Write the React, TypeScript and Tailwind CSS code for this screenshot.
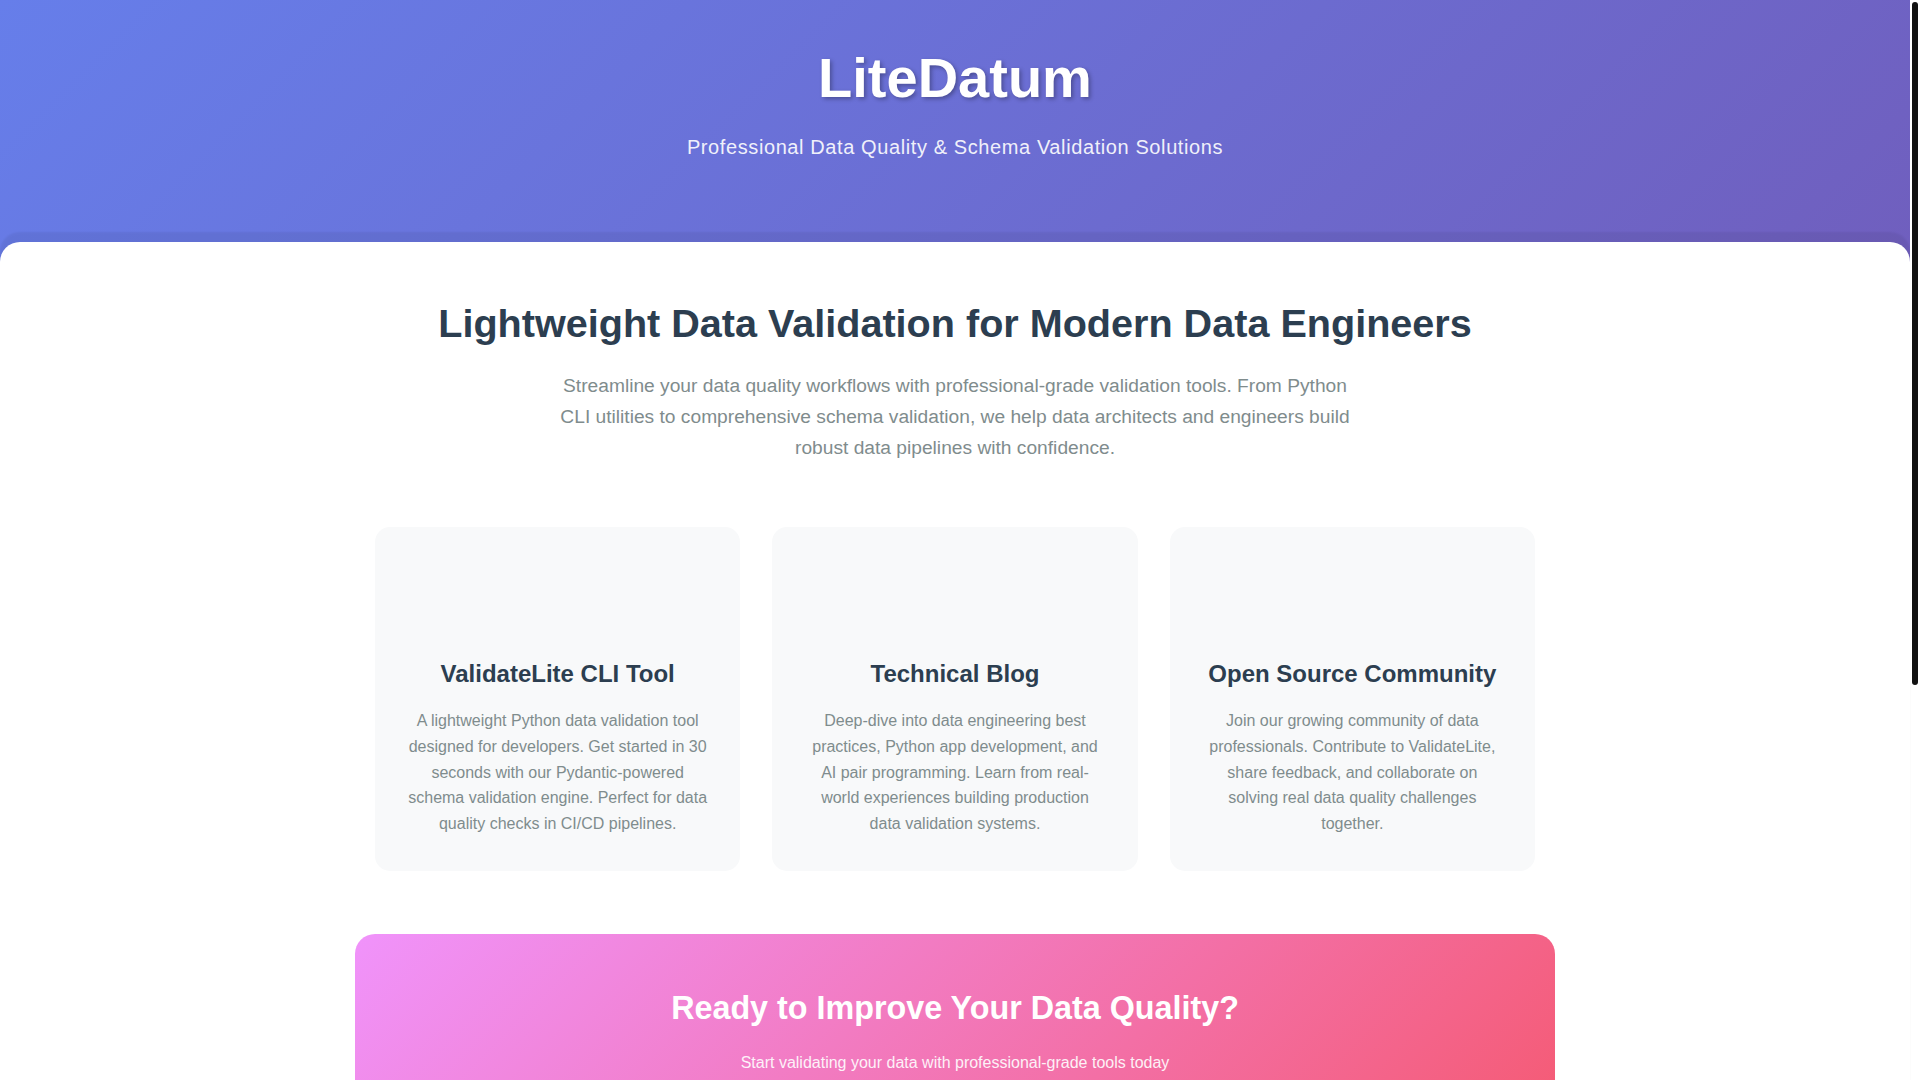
const features = [
  {
    title: 'ValidateLite CLI Tool',
    text: 'A lightweight Python data validation tool designed for developers. Get started in 30 seconds with our Pydantic-powered schema validation engine. Perfect for data quality checks in CI/CD pipelines.',
  },
  {
    title: 'Technical Blog',
    text: 'Deep-dive into data engineering best practices, Python app development, and AI pair programming. Learn from real-world experiences building production data validation systems.',
  },
  {
    title: 'Open Source Community',
    text: 'Join our growing community of data professionals. Contribute to ValidateLite, share feedback, and collaborate on solving real data quality challenges together.',
  },
];

function FeatureCard({ title, text }: { title: string; text: string }) {
  return (
    <div className="flex flex-col items-center rounded-[15px] bg-[#f8f9fa] px-8 pt-8 pb-[35px] text-center">
      {/* icon slot (icon font did not render in the original) */}
      <div className="h-[100px] w-full" />
      <h3 className="mb-[20px] text-[24px] font-bold leading-[29px] text-[#2c3e50]">{title}</h3>
      <p className="text-[16px] leading-[1.6] text-[#7f8c8d]">{text}</p>
    </div>
  );
}

export default function App() {
  return (
    <div className="flex bg-white font-['Liberation_Sans',Arial,sans-serif]">
      <div className="min-w-0 flex-1 bg-[linear-gradient(135deg,#667eea_0%,#764ba2_100%)]">
        <header className="pt-[44px] pb-[100px] text-center text-white">
          <h1 className="text-[56px] font-bold leading-[1.2] [text-shadow:2px_2px_4px_rgba(0,0,0,0.3)]">
            LiteDatum
          </h1>
          <p className="mt-[21px] text-[20px] leading-[30px] tracking-[0.6px] opacity-90">
            Professional Data Quality &amp; Schema Validation Solutions
          </p>
        </header>

        <main className="relative -mt-[20px] rounded-t-[20px] bg-white px-5 pt-[57px] pb-16 shadow-[0_-10px_2px_rgba(0,0,0,0.06)]">
          <section className="text-center">
            <h2 className="mb-6 text-[39.6px] font-bold leading-[48px] text-[#2c3e50]">
              Lightweight Data Validation for Modern Data Engineers
            </h2>
            <p className="mx-auto mb-[64px] max-w-[800px] text-[19.2px] leading-[1.6] text-[#7f8c8d]">
              Streamline your data quality workflows with professional-grade validation tools. From Python CLI
              utilities to comprehensive schema validation, we help data architects and engineers build robust
              data pipelines with confidence.
            </p>
          </section>

          <div className="mx-auto mb-[63px] grid max-w-[1160px] grid-cols-3 gap-8">
            {features.map((f) => (
              <FeatureCard key={f.title} title={f.title} text={f.text} />
            ))}
          </div>

          <section className="mx-auto max-w-[1200px] rounded-[20px] bg-[linear-gradient(135deg,#f093fb_0%,#f5576c_100%)] px-8 pt-[55px] pb-12 text-center text-white">
            <h2 className="mb-6 text-[32.3px] font-bold leading-[38px]">Ready to Improve Your Data Quality?</h2>
            <p className="mb-8 text-[16px] leading-[24px] opacity-90">
              Start validating your data with professional-grade tools today
            </p>
            <div className="flex justify-center gap-4">
              <button className="rounded-full bg-white px-8 py-3 text-[16px] font-bold text-[#f5576c]">
                Get Started
              </button>
              <button className="rounded-full border-2 border-white px-8 py-3 text-[16px] font-bold text-white">
                Read the Blog
              </button>
            </div>
          </section>

          <footer className="mx-auto mt-16 flex h-[300px] max-w-[1200px] flex-col items-center justify-center gap-3 border-t border-[#ecf0f1] text-center text-[14px] text-[#7f8c8d]">
            <p className="text-[20px] font-bold text-[#2c3e50]">LiteDatum</p>
            <p>Professional Data Quality &amp; Schema Validation Solutions</p>
            <p>© 2025 LiteDatum. All rights reserved.</p>
          </footer>
        </main>
      </div>

      {/* browser scrollbar as it appears in the screenshot */}
      <div className="w-[10px] shrink-0 bg-white px-[2px] pt-[2px]">
        <div className="h-[683px] rounded-[3px] bg-[#111]" />
      </div>
    </div>
  );
}
